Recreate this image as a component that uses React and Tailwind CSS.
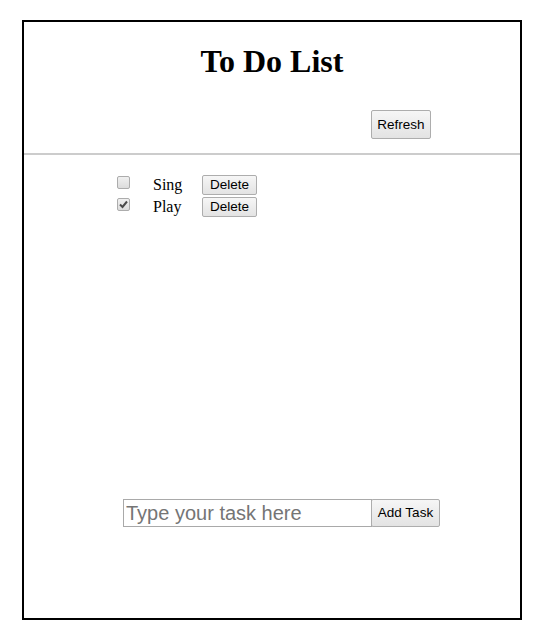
import React, { useState } from "react";

const btn =
  "font-['Liberation_Sans',Arial,sans-serif] text-[13.5px] leading-none text-black bg-gradient-to-b from-[#f6f6f6] to-[#e3e3e3] border border-[#adadad] rounded-[2px]";

const Check = ({ checked }) => (
  <span className="relative w-[13px] h-[13px] border border-[#acacac] rounded-[2px] bg-gradient-to-b from-[#f0f0f0] to-[#dcdcdc] flex items-center justify-center">
    {checked && (
      <svg width="9" height="9" viewBox="0 0 9 9" className="block">
        <path d="M1 4.5 L3.5 7 L8 1.5" fill="none" stroke="#4a4a4a" strokeWidth="2" />
      </svg>
    )}
  </span>
);

const App = () => {
  const [tasks] = useState([
    { name: "Sing", done: false },
    { name: "Play", done: true },
  ]);

  return (
    <div className="pt-[20px] pl-[22px] bg-white min-h-[637px]">
      <div className="w-[500px] h-[600px] border-2 border-black flex flex-col">
        {/* Header */}
        <h1 className="mt-[21px] text-center font-['Liberation_Serif','Times_New_Roman',serif] font-bold text-[32px] leading-[37px] text-black">
          To Do List
        </h1>
        <div className="mt-[30px] flex justify-end pr-[89px]">
          <button className={`${btn} h-[29px] w-[60px]`}>Refresh</button>
        </div>
        <div className="mt-[14px] h-[2px] bg-[#cccccc]" />

        {/* Tasks */}
        <div className="mt-[19px] flex flex-col pl-[93px]">
          {tasks.map((t) => (
            <div key={t.name} className="flex items-center h-[22px]">
              <div className="w-[36px] flex -mt-[5px]">
                <Check checked={t.done} />
              </div>
              <span className="w-[49px] font-['Liberation_Serif','Times_New_Roman',serif] text-[16px] text-black">
                {t.name}
              </span>
              <button className={`${btn} h-[20px] w-[55px]`}>Delete</button>
            </div>
          ))}
        </div>

        {/* Add task */}
        <div className="mt-auto mb-[91px] pl-[99px] flex">
          <input
            type="text"
            placeholder="Type your task here"
            className="w-[249px] h-[28px] border border-[#a9a9a9] px-[2px] font-['Liberation_Sans',Arial,sans-serif] text-[20px] placeholder:text-[#757575] outline-none"
          />
          <button className={`${btn} h-[28px] w-[69px] -ml-px`}>Add Task</button>
        </div>
      </div>
    </div>
  );
};

export default App;
